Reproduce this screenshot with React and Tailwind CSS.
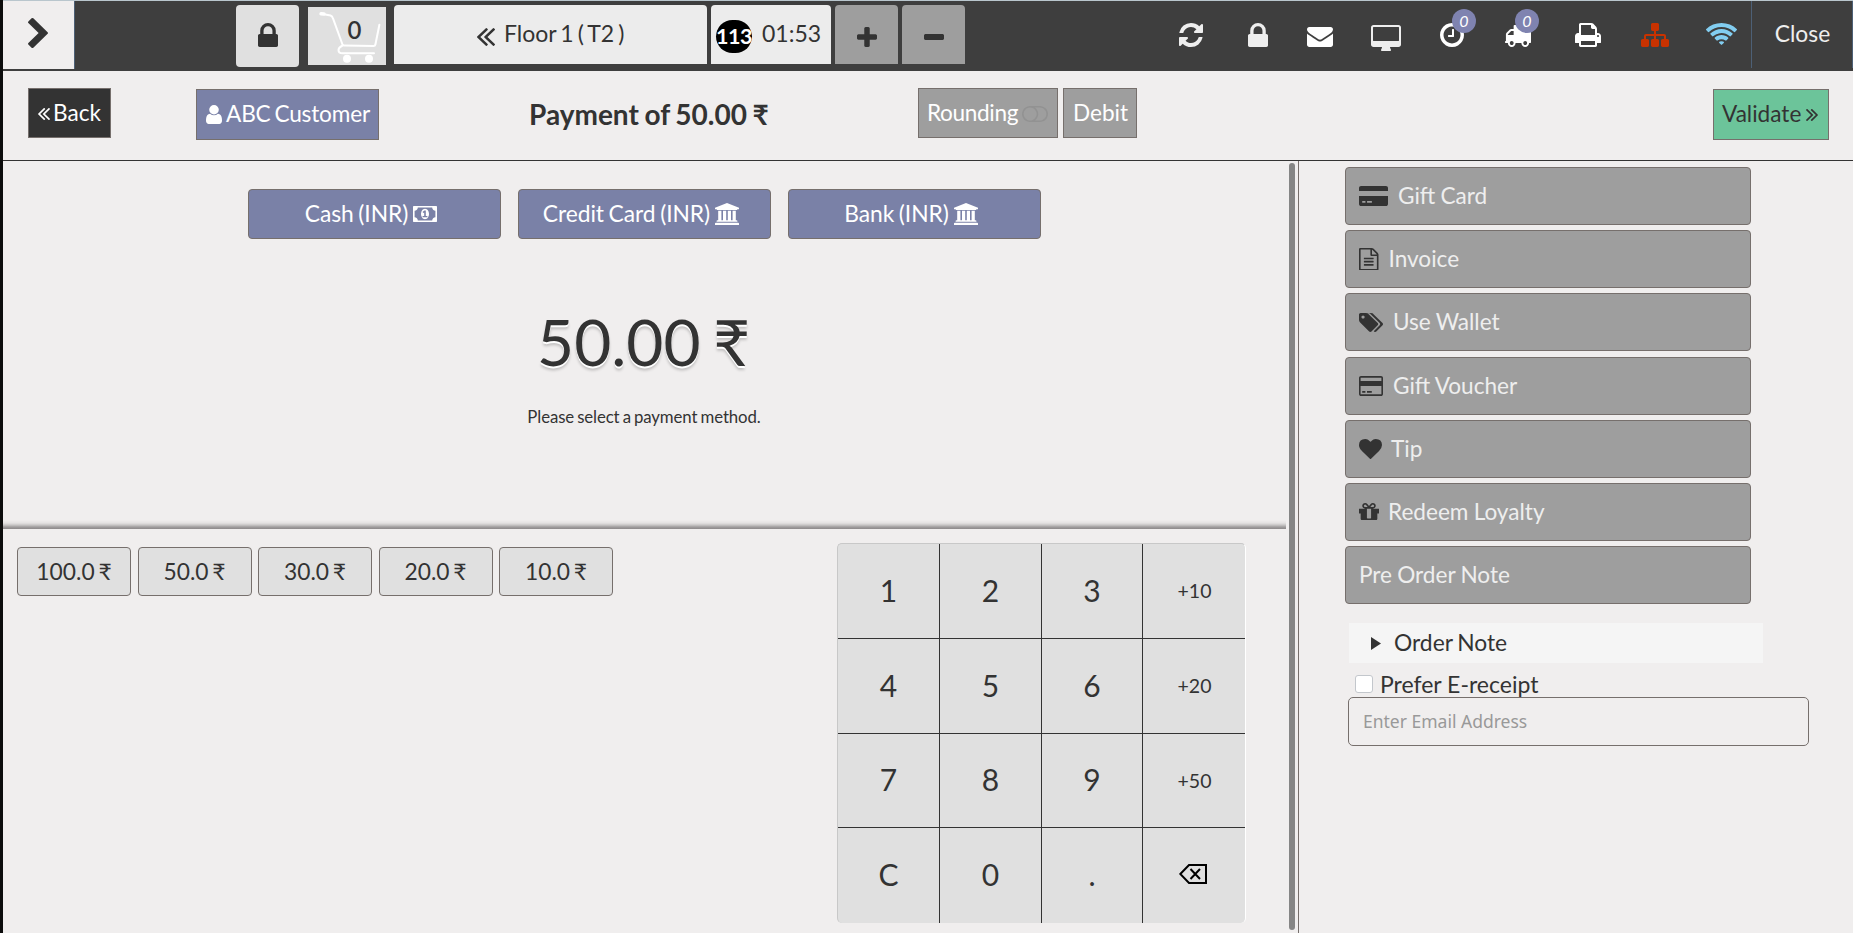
const ICONS = {
  lock: ["320 128 1152 1408", "M640 768h512v-192q0-106-75-181t-181-75-181 75-75 181v192zm832 96v576q0 40-28 68t-68 28h-960q-40 0-68-28t-28-68v-576q0-40 28-68t68-28h32v-192q0-184 132-316t316-132 316 132 132 316v192h32q40 0 68 28t28 68z"],
  chevron: ["346 26 1036 1612", "M1363 877l-742 742q-19 19-45 19t-45-19l-166-166q-19-19-19-45t19-45l531-531-531-531q-19-19-19-45t19-45l166-166q19-19 45-19t45 19l742 742q19 19 19 45t-19 45z"],
  doubleLeft: ["429 461 966 998", "M1011 1376q0 13-10 23l-50 50q-10 10-23 10t-23-10l-466-466q-10-10-10-23t10-23l466-466q10-10 23-10t23 10l50 50q10 10 10 23t-10 23l-393 393 393 393q10 10 10 23zm384 0q0 13-10 23l-50 50q-10 10-23 10t-23-10l-466-466q-10-10-10-23t10-23l466-466q10-10 23-10t23 10l50 50q10 10 10 23t-10 23l-393 393 393 393q10 10 10 23z"],
  plus: ["192 128 1408 1408", "M1600 736v192q0 40-28 68t-68 28h-416v416q0 40-28 68t-68 28h-192q-40 0-68-28t-28-68v-416h-416q-40 0-68-28t-28-68v-192q0-40 28-68t68-28h416v-416q0-40 28-68t68-28h192q40 0 68 28t28 68v416h416q40 0 68 28t28 68z"],
  minus: ["192 640 1408 384", "M1600 736v192q0 40-28 68t-68 28h-1216q-40 0-68-28t-28-68v-192q0-40 28-68t68-28h1216q40 0 68 28t28 68z"],
  refresh: ["128 128 1536 1536", "M1639 1056q0 5-1 7-64 268-268 434.5t-478 166.5q-146 0-282.5-55t-243.5-157l-129 129q-19 19-45 19t-45-19-19-45v-448q0-26 19-45t45-19h448q26 0 45 19t19 45-19 45l-137 137q71 66 161 102t187 36q134 0 250-65t186-179q11-17 53-117 8-23 30-23h192q13 0 22.5 9.5t9.5 22.5zm25-800v448q0 26-19 45t-45 19h-448q-26 0-45-19t-19-45 19-45l138-138q-148-137-349-137-134 0-250 65t-186 179q-11 17-53 117-8 23-30 23h-199q-13 0-22.5-9.5t-9.5-22.5v-7q65-268 270-434.5t480-166.5q146 0 284 55.5t245 156.5l130-129q19-19 45-19t45 19 19 45z"],
  envelope: ["0 256 1792 1408", "M1792 710v794q0 66-47 113t-113 47h-1472q-66 0-113-47t-47-113v-794q44 49 101 87 362 246 497 345 57 42 92.5 65.5t94.5 48 110 24.5h2q51 0 110-24.5t94.5-48 92.5-65.5q170-123 498-345 57-39 100-87zm0-294q0 79-49 151t-122 123q-376 261-468 325-10 7-42.5 30.5t-54 38-52 32.5-57.5 27-50 9h-2q-23 0-50-9t-57.5-27-52-32.5-54-38-42.5-30.5q-91-64-262-182.5t-205-142.5q-62-42-117-115.5t-55-136.5q0-78 41.5-130t118.5-52h1472q65 0 112.5 47t47.5 113z"],
  desktop: ["-64 0 1920 1664", "M1728 992v-832q0-13-9.5-22.5t-22.5-9.5h-1600q-13 0-22.5 9.5t-9.5 22.5v832q0 13 9.5 22.5t22.5 9.5h1600q13 0 22.5-9.5t9.5-22.5zm128-832v1088q0 66-47 113t-113 47h-544q0 37 16 77.5t32 71 16 43.5q0 26-19 45t-45 19h-512q-26 0-45-19t-19-45q0-14 16-44t32-70 16-78h-544q-66 0-113-47t-47-113v-1088q0-66 47-113t113-47h1600q66 0 113 47t47 113z"],
  clock: ["128 128 1536 1536", "M1024 544v448q0 14-9 23t-23 9h-320q-14 0-23-9t-9-23v-64q0-14 9-23t23-9h224v-352q0-14 9-23t23-9h64q14 0 23 9t9 23zm416 352q0-148-73-273t-198-198-273-73-273 73-198 198-73 273 73 273 198 198 273 73 273-73 198-198 73-273zm224 0q0 209-103 385.5t-279.5 279.5-385.5 103-385.5-103-279.5-279.5-103-385.5 103-385.5 279.5-279.5 385.5-103 385.5 103 279.5 279.5 103 385.5z"],
  truck: ["0 256 1792 1408", "M640 1408q0-52-38-90t-90-38-90 38-38 90 38 90 90 38 90-38 38-90zm-384-512h384v-256h-158q-13 0-22 9l-195 195q-9 9-9 22v30zm1280 512q0-52-38-90t-90-38-90 38-38 90 38 90 90 38 90-38 38-90zm256-1088v1024q0 15-4 26.5t-13.5 18.5-16.5 11.5-23.5 6-22.5 2-25.5 0-22.5-.5q0 106-75 181t-181 75-181-75-75-181h-384q0 106-75 181t-181 75-181-75-75-181h-64q-3 0-22.5.5t-25.5 0-22.5-2-23.5-6-16.5-11.5-13.5-18.5-4-26.5q0-26 19-45t45-19v-320q0-8-.5-35t0-38 2.5-34.5 6.5-37 14-30.5 22.5-30l198-198q19-19 50.5-32t58.5-13h160v-192q0-26 19-45t45-19h1024q26 0 45 19t19 45z"],
  print: ["64 128 1664 1536", "M448 1536h896v-256h-896v256zm0-640h896v-384h-160q-40 0-68-28t-28-68v-160h-640v640zm1152 64q0-26-19-45t-45-19-45 19-19 45 19 45 45 19 45-19 19-45zm128 0v416q0 13-9.5 22.5t-22.5 9.5h-224v160q0 40-28 68t-68 28h-960q-40 0-68-28t-28-68v-160h-224q-13 0-22.5-9.5t-9.5-22.5v-416q0-79 56.5-135.5t135.5-56.5h64v-544q0-40 28-68t68-28h672q40 0 88 20t76 48l152 152q28 28 48 76t20 88v256h64q79 0 135.5 56.5t56.5 135.5z"],
  sitemap: ["0 128 1792 1536", "M1792 1248v320q0 40-28 68t-68 28h-320q-40 0-68-28t-28-68v-320q0-40 28-68t68-28h96v-192h-512v192h96q40 0 68 28t28 68v320q0 40-28 68t-68 28h-320q-40 0-68-28t-28-68v-320q0-40 28-68t68-28h96v-192h-512v192h96q40 0 68 28t28 68v320q0 40-28 68t-68 28h-320q-40 0-68-28t-28-68v-320q0-40 28-68t68-28h96v-192q0-52 38-90t90-38h512v-192h-96q-40 0-68-28t-28-68v-320q0-40 28-68t68-28h320q40 0 68 28t28 68v320q0 40-28 68t-68 28h-96v192h512q52 0 90 38t38 90v192h96q40 0 68 28t28 68z"],
  wifi: ["50 128 1948 1395", "M1024 1523q-20 0-93-73.5t-73-93.5q0-32 62.5-54t103.5-22 103.5 22 62.5 54q0 20-73 93.5t-93 73.5zm270-271q-2 0-40-25t-101.5-50-128.5-25-128.5 25-101 50-40.5 25q-18 0-93.5-75t-75.5-93q0-13 10-23 78-77 196-121t233-44 233 44 196 121q10 10 10 23 0 18-75.5 93t-93.5 75zm273-272q-11 0-23-8-136-105-252-154.5t-268-49.5q-85 0-170.5 22t-149 53-113.5 62-79 53-31 22q-17 0-92-75t-75-93q0-12 10-22 132-132 320-205t380-73 380 73 320 205q10 10 10 22 0 18-75 93t-92 75zm271-271q-11 0-22-9-179-157-371.5-236.5t-420.5-79.5-420.5 79.5-371.5 236.5q-11 9-22 9-17 0-92.5-75t-75.5-93q0-13 10-23 187-186 445-288t527-102 527 102 445 288q10 10 10 23 0 18-75.5 93t-92.5 75z"],
  user: ["256 128 1280 1536", "M1536 1399q0 109-62.5 187t-150.5 78h-854q-88 0-150.5-78t-62.5-187q0-85 8.5-160.5t31.5-152 58.5-131 94-89 134.5-34.5q131 128 313 128t313-128q76 0 134.5 34.5t94 89 58.5 131 31.5 152 8.5 160.5zm-256-887q0 159-112.5 271.5t-271.5 112.5-271.5-112.5-112.5-271.5 112.5-271.5 271.5-112.5 271.5 112.5 112.5 271.5z"],
  bank: ["0 0 1920 1792", "M960 0l960 384v128h-128q0 26-20.5 45t-48.5 19h-1526q-28 0-48.5-19t-20.5-45h-128v-128zm-704 640h256v768h128v-768h256v768h128v-768h256v768h128v-768h256v768h59q28 0 48.5 19t20.5 45v64h-1664v-64q0-26 20.5-45t48.5-19h59v-768zm1595 960q28 0 48.5 19t20.5 45v128h-1920v-128q0-26 20.5-45t48.5-19h1782z"],
  money: ["0 256 1920 1280", "M768 1152h384v-96h-128v-448h-114l-148 137 77 80q42-37 55-57h2v288h-128v96zm512-256q0 70-21 142t-59.5 134-101.5 101-138 39-138-39-101.5-101-59.5-134-21-142 21-142 59.5-134 101.5-101 138-39 138 39 101.5 101 59.5 134 21 142zm512 256v-512q-106 0-181-75t-75-181h-1152q0 106-75 181t-181 75v512q106 0 181 75t75 181h1152q0-106 75-181t181-75zm128-832v1152q0 26-19 45t-45 19h-1792q-26 0-45-19t-19-45v-1152q0-26 19-45t45-19h1792q26 0 45 19t19 45z"],
  toggle: ["0 256 2048 1280", "M1152 896q0-104-40.5-198.5t-109.5-163.5-163.5-109.5-198.5-40.5-198.5 40.5-163.5 109.5-109.5 163.5-40.5 198.5 40.5 198.5 109.5 163.5 163.5 109.5 198.5 40.5 198.5-40.5 163.5-109.5 109.5-163.5 40.5-198.5zm768 0q0-104-40.5-198.5t-109.5-163.5-163.5-109.5-198.5-40.5h-386q119 90 188.5 224t69.5 288-69.5 288-188.5 224h386q104 0 198.5-40.5t163.5-109.5 109.5-163.5 40.5-198.5zm128 0q0 130-51 248.5t-136.5 204-204 136.5-248.5 51h-768q-130 0-248.5-51t-204-136.5-136.5-204-51-248.5 51-248.5 136.5-204 204-136.5 248.5-51h768q130 0 248.5 51t204 136.5 136.5 204 51 248.5z"],
  heart: ["0 128 1792 1536", "M896 1664q-26 0-44-18l-624-602q-10-8-27.5-26t-55.5-65.5-68-97.5-53.5-121-23.5-138q0-220 127-344t351-124q62 0 126.5 21.5t120 58 95.5 68.5 76 68q36-36 76-68t95.5-68.5 120-58 126.5-21.5q224 0 351 124t127 344q0 221-229 450l-623 600q-18 18-44 18z"],
  file: ["128 0 1536 1792", "M1596 380q28 28 48 76t20 88v1152q0 40-28 68t-68 28h-1344q-40 0-68-28t-28-68v-1600q0-40 28-68t68-28h896q40 0 88 20t76 48zm-444-244v376h376q-10-29-22-41l-313-313q-12-12-41-22zm384 1528v-1024h-416q-40 0-68-28t-28-68v-416h-768v1536h1280zm-1024-864q0-14 9-23t23-9h704q14 0 23 9t9 23v64q0 14-9 23t-23 9h-704q-14 0-23-9t-9-23v-64zm736 224q14 0 23 9t9 23v64q0 14-9 23t-23 9h-704q-14 0-23-9t-9-23v-64q0-14 9-23t23-9h704zm0 256q14 0 23 9t9 23v64q0 14-9 23t-23 9h-704q-14 0-23-9t-9-23v-64q0-14 9-23t23-9h704z"],
  tags: ["0 128 1899 1515", "M448 448q0-53-37.5-90.5t-90.5-37.5-90.5 37.5-37.5 90.5 37.5 90.5 90.5 37.5 90.5-37.5 37.5-90.5zm1067 576q0 53-37 90l-491 492q-39 37-91 37-53 0-90-37l-715-716q-38-37-64.5-101t-26.5-117v-416q0-52 38-90t90-38h416q53 0 117 26.5t102 64.5l715 714q37 39 37 91zm384 0q0 53-37 90l-491 492q-39 37-91 37-36 0-59-14t-53-45l470-470q37-37 37-90 0-52-37-91l-715-714q-38-38-102-64.5t-117-26.5h224q53 0 117 26.5t102 64.5l715 714q37 39 37 91z"],
  card: ["0 128 1920 1536", "M1760 128q66 0 113 47t47 113v1216q0 66-47 113t-113 47h-1600q-66 0-113-47t-47-113v-1216q0-66 47-113t113-47h1600zm-1600 128q-13 0-22.5 9.5t-9.5 22.5v224h1664v-224q0-13-9.5-22.5t-22.5-9.5h-1600zm1600 1280q13 0 22.5-9.5t9.5-22.5v-608h-1664v608q0 13 9.5 22.5t22.5 9.5h1600zm-1504-128v-128h256v128h-256zm384 0v-128h384v128h-384z"],
  cardSolid: ["0 128 2304 1536", "M0 1504v-608h2304v608q0 66-47 113t-113 47h-1984q-66 0-113-47t-47-113zm640-224v128h384v-128h-384zm-384 0v128h256v-128h-256zm1888-1152q66 0 113 47t47 113v224h-2304v-224q0-66 47-113t113-47h1984z"],
  gift: ["128 192 1536 1344", "M1056 1356v-716h-320v716q0 25 18 38.5t46 13.5h192q28 0 46-13.5t18-38.5zm-456-844h195l-126-161q-26-31-69-31-40 0-68 28t-28 68 28 68 68 28zm688-96q0-40-28-68t-68-28q-43 0-69 31l-125 161h194q40 0 68-28t28-68zm376 256v320q0 14-9 23t-23 9h-96v416q0 40-28 68t-68 28h-1088q-40 0-68-28t-28-68v-416h-96q-14 0-23-9t-9-23v-320q0-14 9-23t23-9h440q-93 0-158.5-65.5t-65.5-158.5 65.5-158.5 158.5-65.5q107 0 168 77l128 165 128-165q61-77 168-77 93 0 158.5 65.5t65.5 158.5-65.5 158.5-158.5 65.5h440q14 0 23 9t9 23z"],
};

function Icon({ name, className }) {
  const [box, d] = ICONS[name];
  return (
    <svg viewBox={box} preserveAspectRatio="none" fill="currentColor" className={"block shrink-0 " + className}>
      <path d={d} />
    </svg>
  );
}

function Cart() {
  return (
    <svg viewBox="0 0 78 58" className="block h-[58px] w-[78px]" fill="none" stroke="#fff" strokeLinecap="round" strokeLinejoin="round">
      <path strokeWidth="3.4" d="M13 6.8l3 .2" />
      <path strokeWidth="2" d="M16 7.2l6.5 1.3q1.8.6 2.4 2.6l9.6 26.4q.5 1 1.5.9l29.5.7q1.6 0 1.9-1.6l4-19.8" />
      <path strokeWidth="2" d="M34.5 38.5q-4 2-4 4.5 0 3.3 4 3.3h31.5" />
      <circle cx="39" cy="51.7" r="4" fill="#fff" stroke="none" />
      <circle cx="61" cy="51.7" r="4" fill="#fff" stroke="none" />
    </svg>
  );
}

function Badge({ className }) {
  return (
    <span className={"absolute flex size-6 items-center justify-center rounded-full bg-[#7f83b0] text-[16px] italic leading-none text-white " + className}>
      0
    </span>
  );
}

function Header() {
  return (
    <header className="flex h-[71px] items-start border-t border-[#b9c6cd] bg-[#3e3e3e] text-[#333]">
      <button className="flex h-[68px] w-[72px] shrink-0 items-start border-r border-[#4d6076] bg-[#f0eeee] pl-[25px] pt-[17px]">
        <Icon name="chevron" className="h-[30px] w-[20px]" />
      </button>
      <button className="ml-[161px] mt-1 flex h-[62px] w-[63px] shrink-0 justify-center rounded bg-[#e0e0e0] pt-[18px]">
        <Icon name="lock" className="h-[24px] w-[20px]" />
      </button>
      <div className="relative ml-[9px] mt-[6px] h-[58px] w-[78px] shrink-0 bg-[#e0e0e0]">
        <Cart />
        <span className="absolute left-[39.5px] top-[11px] text-[24px] font-semibold leading-none">0</span>
      </div>
      <button className="ml-[8px] mt-1 flex h-[59px] w-[313px] shrink-0 items-start rounded-t bg-[#ececec] pl-[83px]">
        <Icon name="doubleLeft" className="mt-[23px] size-[18px]" />
        <span className="ml-[9px] mt-[13px] whitespace-nowrap text-[23px] leading-[30px] [word-spacing:-1.8px]">Floor 1 ( T2 )</span>
      </button>
      <button className="ml-1 mt-1 flex h-[59px] w-[120px] shrink-0 items-start rounded-t bg-[#ececec] pl-[5px]">
        <span className="mt-[15px] flex h-[33px] w-[36px] items-center justify-center rounded-full bg-black text-[21.5px] font-bold leading-none tracking-[-0.5px] text-white">
          113
        </span>
        <span className="ml-[10px] mt-[13px] text-[23px] leading-[30px]">01:53</span>
      </button>
      <button className="ml-1 mt-1 flex h-[59px] w-[63px] shrink-0 justify-center rounded-t bg-[#9e9e9e] pt-[22px]">
        <Icon name="plus" className="size-[20px]" />
      </button>
      <button className="ml-1 mt-1 flex h-[59px] w-[63px] shrink-0 justify-center rounded-t bg-[#9e9e9e] pt-[29px]">
        <Icon name="minus" className="h-[6px] w-[20px]" />
      </button>
      <div className="ml-[214px] flex shrink-0 items-start text-white">
        <Icon name="refresh" className="mt-[22px] size-[24px] text-[#eee]" />
        <Icon name="lock" className="ml-[45px] mt-[22px] h-[24px] w-[20px] text-[#eee]" />
        <Icon name="envelope" className="ml-[39px] mt-[26px] h-[20px] w-[26px]" />
        <Icon name="desktop" className="ml-[38px] mt-[24px] h-[26px] w-[30px] text-[#eee]" />
        <div className="relative ml-[39px] mt-[22px]">
          <Icon name="clock" className="size-[24px]" />
          <Badge className="left-[12px] top-[-14px]" />
        </div>
        <div className="relative ml-[40px] mt-[24px]">
          <Icon name="truck" className="h-[22px] w-[27px]" />
          <Badge className="left-[11px] top-[-16px]" />
        </div>
        <Icon name="print" className="ml-[44px] mt-[22px] h-[24px] w-[26px]" />
        <Icon name="sitemap" className="ml-[40px] mt-[22px] h-[24px] w-[28px] text-[#c83200]" />
        <Icon name="wifi" className="ml-[37px] mt-[22px] h-[22px] w-[31px] text-[#82cdf0]" />
      </div>
      <button className="ml-[14px] h-[67px] w-[102px] shrink-0 border-x border-[#4d6076] pb-[3px] pl-px text-[22.8px] leading-[30px] text-[#eee]">
        Close
      </button>
    </header>
  );
}

function ActionBar() {
  return (
    <div className="flex h-[90px] items-start border-b border-[#333] text-[22.6px] text-white">
      <button className="ml-[25px] mt-[17px] flex h-[50px] w-[83px] shrink-0 items-center border border-[#766f6c] bg-[#333] pb-px pl-[9px]">
        <Icon name="doubleLeft" className="mt-[3px] size-[12px]" />
        <span className="ml-[3px] whitespace-nowrap">Back</span>
      </button>
      <button className="ml-[85px] mt-[18px] flex h-[51px] w-[183px] shrink-0 items-center border border-[#766f6c] bg-[#7a81a7] pb-px pl-[9px]">
        <Icon name="user" className="h-[19px] w-[16px]" />
        <span className="ml-[4px] whitespace-nowrap tracking-[-0.15px] [word-spacing:-1.8px]">ABC Customer</span>
      </button>
      <h1 className="ml-[150px] mt-[23px] w-[389px] shrink-0 whitespace-nowrap text-[28px] font-bold leading-[40px] text-[#333] [word-spacing:-1.2px]">
        Payment of 50.00 ₹
      </h1>
      <button className="mt-[17px] flex h-[50px] w-[140px] shrink-0 items-center border border-[#766f6c] bg-[#9e9e9e] pl-[8px]">
        <span className="tracking-[-0.35px]">Rounding</span>
        <Icon name="toggle" className="ml-[4px] mt-px h-[16px] w-[26px] text-[#929292]" />
      </button>
      <button className="ml-[5px] mt-[17px] h-[50px] w-[74px] shrink-0 border border-[#766f6c] bg-[#9e9e9e] pl-px">Debit</button>
      <button className="ml-[576px] mt-[18px] flex h-[51px] w-[116px] shrink-0 items-center border border-[#766f6c] bg-[#6cc49a] pb-px pl-[8px] text-[#333]">
        <span>Validate</span>
        <Icon name="doubleLeft" className="ml-[5px] mt-px size-[12px] -scale-x-100" />
      </button>
    </div>
  );
}

const METHODS = [
  { label: "Cash (INR)", icon: "money", size: "w-[24px] h-[16px]" },
  { label: "Credit Card (INR)", icon: "bank", size: "w-[24px] h-[22px]" },
  { label: "Bank (INR)", icon: "bank", size: "w-[24px] h-[22px]" },
];

const KEYS = ["1", "2", "3", "+10", "4", "5", "6", "+20", "7", "8", "9", "+50", "C", "0", ".", "back"];

function Keypad() {
  return (
    <div className="grid h-[380px] w-[409px] grid-cols-[102px_102px_101px_102px] grid-rows-[95px_95px_94px_95px] overflow-hidden rounded-[5px] border-l border-t border-[#c8c8c8] border-r border-r-white bg-[#e0e0e0] text-[30px] text-[#333]">
      {KEYS.map((key, i) => (
        <button
          key={key}
          className={
            "flex items-center justify-center border-[#333] " +
            (i % 4 < 3 ? "border-r " : "") +
            (i < 12 ? "border-b " : "") +
            (key[0] === "+" ? "pl-px text-[19.5px]" : key === "back" ? "" : "pb-[2px]")
          }
        >
          {key === "back" ? (
            <svg viewBox="0 0 28 20" className="mb-[4px] mr-[2px] h-[20px] w-[28px]" fill="none" stroke="#000" strokeWidth="2">
              <path d="M1.3 10l8.7-9h17v18h-17z" />
              <path d="M11.5 5l9.5 10M21 5l-9.5 10" />
            </svg>
          ) : (
            key
          )}
        </button>
      ))}
    </div>
  );
}

function PaymentPanel() {
  return (
    <section className="flex w-[1283px] shrink-0 flex-col">
      <div className="flex h-[368px] flex-col items-center bg-[linear-gradient(to_top,#8d8a8b_0px,#a09d9e_2px,#c8c6c6_4px,#e4e2e2_6px,#f0eeee_9px)] bg-no-repeat pt-[28px]">
        <div className="flex gap-[17px]">
          {METHODS.map((m) => (
            <button key={m.label} className="flex h-[50px] w-[253px] items-center justify-center gap-[5px] rounded border border-[#766f6c] bg-[#7a81a7] pb-px pr-[7px] text-[22.8px] text-white">
              <span className="whitespace-nowrap tracking-[-0.05px] [word-spacing:-1.2px]">{m.label}</span>
              <Icon name={m.icon} className={m.size} />
            </button>
          ))}
        </div>
        <div className="mt-[63px] pr-[2px] text-[64px] leading-[80px] text-[#333] [text-shadow:0_2px_0_#fff,0_4px_3px_rgba(0,0,0,0.2)] [word-spacing:-4px]">50.00 ₹</div>
        <p className="mt-[23px] pr-px text-[16.8px] leading-[24px] tracking-[-0.1px] text-[#333] [word-spacing:-1.1px]">Please select a payment method.</p>
      </div>
      <div className="flex items-start justify-between pl-[14px] pr-[40px] pt-[14px]">
        <div className="mt-[4px] flex gap-[6.5px]">
          {["100.0 ₹", "50.0 ₹", "30.0 ₹", "20.0 ₹", "10.0 ₹"].map((a) => (
            <button key={a} className="h-[49px] w-[114px] rounded border border-[#766f6c] bg-[#e0e0e0] text-[22.8px] text-[#333] [word-spacing:-2px]">
              {a}
            </button>
          ))}
        </div>
        <Keypad />
      </div>
    </section>
  );
}

const OPTIONS = [
  { label: "Gift Card", icon: "cardSolid", size: "w-[29px] h-[20px] mr-[10px]" },
  { label: "Invoice", icon: "file", size: "w-[19.5px] h-[22.5px] mr-[10px]" },
  { label: "Use Wallet", icon: "tags", size: "w-[24px] h-[19px] mr-[10px]" },
  { label: "Gift Voucher", icon: "card", size: "w-[24px] h-[20px] mr-[10px]" },
  { label: "Tip", icon: "heart", size: "w-[23px] h-[20px] mr-[9px]" },
  { label: "Redeem Loyalty", icon: "gift", size: "w-[20px] h-[17px] mr-[9px]" },
  { label: "Pre Order Note" },
];

function OptionsPanel() {
  return (
    <aside className="flex flex-1 flex-col border-l border-[#766f6c] pl-[46px] pt-[6px] text-[23px]">
      <div className="flex flex-col gap-[5.2px]">
        {OPTIONS.map((o) => (
          <button key={o.label} className="flex h-[58px] w-[406px] items-center rounded border border-[#766f6c] bg-[#9e9e9e] pl-[13px] text-[22.6px] text-[#eee] [word-spacing:-0.6px]">
            {o.icon && <Icon name={o.icon} className={"text-[#333] " + o.size} />}
            <span>{o.label}</span>
          </button>
        ))}
      </div>
      <div className="ml-[4px] mt-[19px] flex h-[40px] w-[414px] items-center bg-[#f5f5f5] pl-[22px] text-[#333]">
        <svg viewBox="0 0 10 13" className="h-[13px] w-[10px]" fill="currentColor">
          <path d="M0 0l10 6.5-10 6.5z" />
        </svg>
        <span className="ml-[13px] pb-[2px] text-[22.8px] [word-spacing:-1.2px]">Order Note</span>
      </div>
      <label className="ml-[10px] mt-[7px] flex h-[27px] items-center text-[#333]">
        <span className="h-[18px] w-[18px] rounded-[3px] border border-[#c3c7cc] bg-white" />
        <span className="ml-[7px] mt-px leading-[28px]">Prefer E-receipt</span>
      </label>
      <input
        placeholder="Enter Email Address"
        className="ml-[3px] h-[49px] w-[461px] rounded-[5px] border border-[#766f6c] bg-transparent pb-px pl-[14px] font-['Noto_Sans',sans-serif] text-[17.5px] placeholder:text-[#999]"
      />
    </aside>
  );
}

export default function App() {
  return (
    <div className="flex h-[933px] w-[1853px] flex-col overflow-hidden border-l-[3px] border-[#0c0c0c] bg-[#f0eeee] font-['Lato',sans-serif]">
      <Header />
      <ActionBar />
      <main className="flex h-[772px]">
        <PaymentPanel />
        <div className="ml-[3px] mr-[3px] mt-[2px] h-[767px] w-[6px] shrink-0 rounded-full bg-[#858585]" />
        <OptionsPanel />
      </main>
    </div>
  );
}
